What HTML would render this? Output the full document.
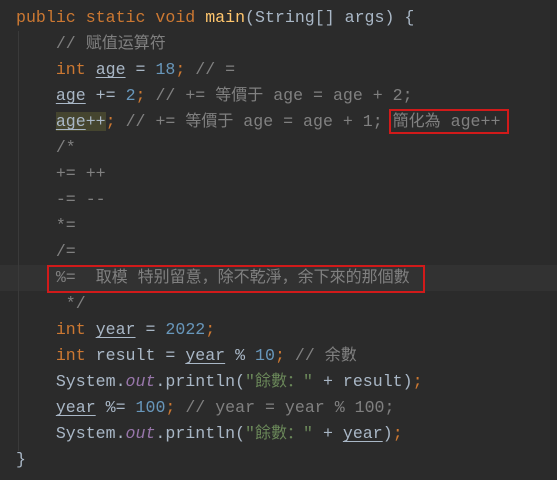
<!DOCTYPE html>
<html><head><meta charset="utf-8"><style>
html,body{margin:0;padding:0;background:#2b2b2b;width:557px;height:480px;overflow:hidden;position:relative}
.l{position:absolute;left:16px;height:26px;line-height:26px;white-space:pre;font-family:"Liberation Mono","Noto Sans CJK SC",monospace;font-size:16.6px;color:#a9b7c6}
.k{color:#cc7832}.c{color:#808080}.n{color:#6897bb}.m{color:#ffc66d}.s{color:#6a8759}.f{color:#9876aa;font-style:italic}
.u{text-decoration:underline;text-underline-offset:3px}
.cj{font-family:"Noto Sans CJK SC","WenQuanYi Zen Hei",sans-serif;font-size:16px;line-height:0}
.cur{position:absolute;left:0;top:265px;width:557px;height:26px;background:#323232}
.g{position:absolute;left:18px;top:31px;width:1px;height:420px;background:#3a3a3a}
.box{position:absolute;border:2px solid #d11a1a;box-sizing:border-box}
.hl{background:#45452f}
</style></head><body>
<div class="cur"></div>
<div class="g"></div>
<div class="l" style="top:5px"><span class="k">public static void </span><span class="m">main</span>(String[] args) {</div>
<div class="l" style="top:31px">    <span class="c">// <span class="cj">赋值运算符</span></span></div>
<div class="l" style="top:57px">    <span class="k">int </span><span class="u">age</span> = <span class="n">18</span><span class="k">;</span> <span class="c">// =</span></div>
<div class="l" style="top:83px">    <span class="u">age</span> += <span class="n">2</span><span class="k">;</span> <span class="c">// += <span class="cj">等價于</span> age = age + 2;</span></div>
<div class="l" style="top:109px">    <span class="hl"><span class="u">age</span>++</span><span class="k">;</span> <span class="c">// += <span class="cj">等價于</span> age = age + 1; <span class="cj">簡化為</span> age++</span></div>
<div class="l" style="top:135px">    <span class="c">/*</span></div>
<div class="l" style="top:161px">    <span class="c">+= ++</span></div>
<div class="l" style="top:187px">    <span class="c">-= --</span></div>
<div class="l" style="top:213px">    <span class="c">*=</span></div>
<div class="l" style="top:239px">    <span class="c">/=</span></div>
<div class="l" style="top:265px">    <span class="c">%=  <span class="cj">取模</span> <span class="cj">特别留意，除不乾淨，余下來的那個數</span></span></div>
<div class="l" style="top:291px">     <span class="c">*/</span></div>
<div class="l" style="top:317px">    <span class="k">int </span><span class="u">year</span> = <span class="n">2022</span><span class="k">;</span></div>
<div class="l" style="top:343px">    <span class="k">int </span>result = <span class="u">year</span> % <span class="n">10</span><span class="k">;</span> <span class="c">// <span class="cj">余數</span></span></div>
<div class="l" style="top:369px">    System.<span class="f">out</span>.println(<span class="s">"<span class="cj">餘數：</span>"</span> + result)<span class="k">;</span></div>
<div class="l" style="top:395px">    <span class="u">year</span> %= <span class="n">100</span><span class="k">;</span> <span class="c">// year = year % 100;</span></div>
<div class="l" style="top:421px">    System.<span class="f">out</span>.println(<span class="s">"<span class="cj">餘數：</span>"</span> + <span class="u">year</span>)<span class="k">;</span></div>
<div class="l" style="top:447px">}</div>
<div class="box" style="left:389px;top:109px;width:120px;height:25px"></div>
<div class="box" style="left:47px;top:265px;width:378px;height:28px"></div>
</body></html>
